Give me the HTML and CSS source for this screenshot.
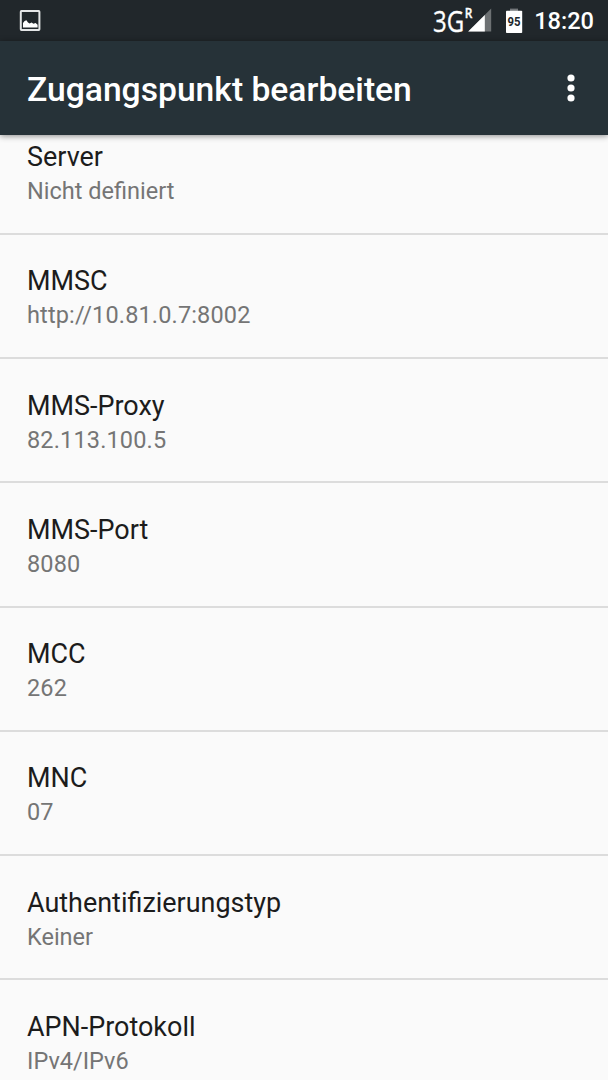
FILE: index.html
```html
<!DOCTYPE html>
<html lang="de">

<head>
    <meta charset="UTF-8">
    <title>Zugangspunkt bearbeiten</title>
    <link rel="stylesheet" href="styles.css">
</head>

<body>
    <div class="status-bar">
        <svg class="picture-icon" width="22" height="22" viewBox="0 0 22 22">
            <rect x="1.8" y="1.1" width="18.6" height="18.8" rx="0.6" fill="none" stroke="#e4e6e7" stroke-width="2"/>
            <path d="M4 17.6V13L5.6 11L7.4 10.2L9 12.4L10.6 13.4L12.6 12.4L14.4 13.8L16.6 13L18.6 14.8V17.6Z" fill="#fff"/>
        </svg>
        <!-- network type and signal strength -->
        <svg class="signal" width="60" height="41" viewBox="0 0 60 41">
            <text class="network" x="1" y="32"><tspan textLength="31.2" lengthAdjust="spacingAndGlyphs">3G</tspan><tspan class="roaming" x="32.8" y="17.7" textLength="7.6" lengthAdjust="spacingAndGlyphs">R</tspan></text>
            <path d="M36.2 31.6L59.2 8.6V31.6Z" fill="#6d7173"/>
            <path d="M36.2 31.6L52.8 15V31.6Z" fill="#fff"/>
        </svg>
        <svg class="battery" width="18" height="26" viewBox="0 0 18 26">
            <rect x="5" y="0.6" width="8" height="3" fill="#73777a"/>
            <rect x="1" y="2.8" width="16.2" height="22.2" rx="0.8" fill="#fff"/>
            <text class="level" x="2.6" y="17.8" textLength="13" lengthAdjust="spacingAndGlyphs">95</text>
        </svg>
        <span class="clock">18:20</span>
    </div>

    <div class="app-bar">
        <h1 class="app-title">Zugangspunkt bearbeiten</h1>
        <svg class="menu-icon" width="8" height="28" viewBox="0 0 8 28">
            <circle cx="4" cy="4" r="3.6" fill="#fff"/>
            <circle cx="4" cy="14" r="3.6" fill="#fff"/>
            <circle cx="4" cy="24" r="3.6" fill="#fff"/>
        </svg>
    </div>

    <div class="list">
        <div class="item">
            <div class="item-title">Server</div>
            <div class="item-value">Nicht definiert</div>
        </div>
        <div class="item">
            <div class="item-title">MMSC</div>
            <div class="item-value number">http://10.81.0.7:8002</div>
        </div>
        <div class="item">
            <div class="item-title">MMS-Proxy</div>
            <div class="item-value number">82.113.100.5</div>
        </div>
        <div class="item">
            <div class="item-title">MMS-Port</div>
            <div class="item-value number">8080</div>
        </div>
        <div class="item">
            <div class="item-title">MCC</div>
            <div class="item-value number">262</div>
        </div>
        <div class="item">
            <div class="item-title">MNC</div>
            <div class="item-value number">07</div>
        </div>
        <div class="item">
            <div class="item-title">Authentifizierungstyp</div>
            <div class="item-value">Keiner</div>
        </div>
        <div class="item">
            <div class="item-title">APN-Protokoll</div>
            <div class="item-value">IPv4/IPv6</div>
        </div>
    </div>
</body>

</html>
```
FILE: styles.css
```css
* {
    box-sizing: border-box;
}

body {
    display: flex;
    flex-direction: column;
    height: 100vh;
    margin: 0;
    overflow: hidden;
    background: #fafafa;
    font-family: Roboto, "Liberation Sans", sans-serif;
}

.status-bar {
    display: flex;
    flex: none;
    align-items: center;
    height: 41px;
    padding: 0 14px 0 19px;
    background: #21272b;
    color: #ffffff;
}

.signal {
    margin-left: auto;
}

.network {
    font-family: "Open Sans", sans-serif;
    font-size: 30px;
    fill: #ffffff;
    stroke: #ffffff;
    stroke-width: .35px;
}

.roaming {
    font-size: 13.5px;
    font-weight: 600;
}

.battery {
    margin-left: 13px;
}

.level {
    font-size: 13.5px;
    font-weight: 700;
    fill: #21272b;
}

.clock {
    margin-left: 11px;
    font-size: 23.6px;
    font-weight: 500;
    line-height: 28px;
}

.app-bar {
    display: flex;
    flex: none;
    align-items: center;
    justify-content: space-between;
    height: 94px;
    padding: 0 33px 0 27px;
    background: #263238;
    box-shadow: 0 1px 6px rgba(0, 0, 0, .45);
    z-index: 1;
}

.app-title {
    margin: 3px 0 0;
    color: #ffffff;
    font-size: 33.65px;
    font-weight: 500;
    line-height: 40px;
}

.list {
    flex: 1;
    min-height: 0;
    overflow: hidden;
}

.item {
    height: 124.25px;
    padding: 30.5px 27px 0;
    border-bottom: 2px solid #dcdcdc;
}

/* the list is scrolled, the first row is partly under the bar */
.item:first-child {
    margin-top: -24.5px;
}

.item-title {
    color: #1c1c1c;
    font-size: 26.95px;
    line-height: 32px;
}

.item-value {
    margin-top: 4px;
    color: #757575;
    font-size: 23.5px;
    line-height: 28px;
}

.number {
    letter-spacing: .15px;
}
```
